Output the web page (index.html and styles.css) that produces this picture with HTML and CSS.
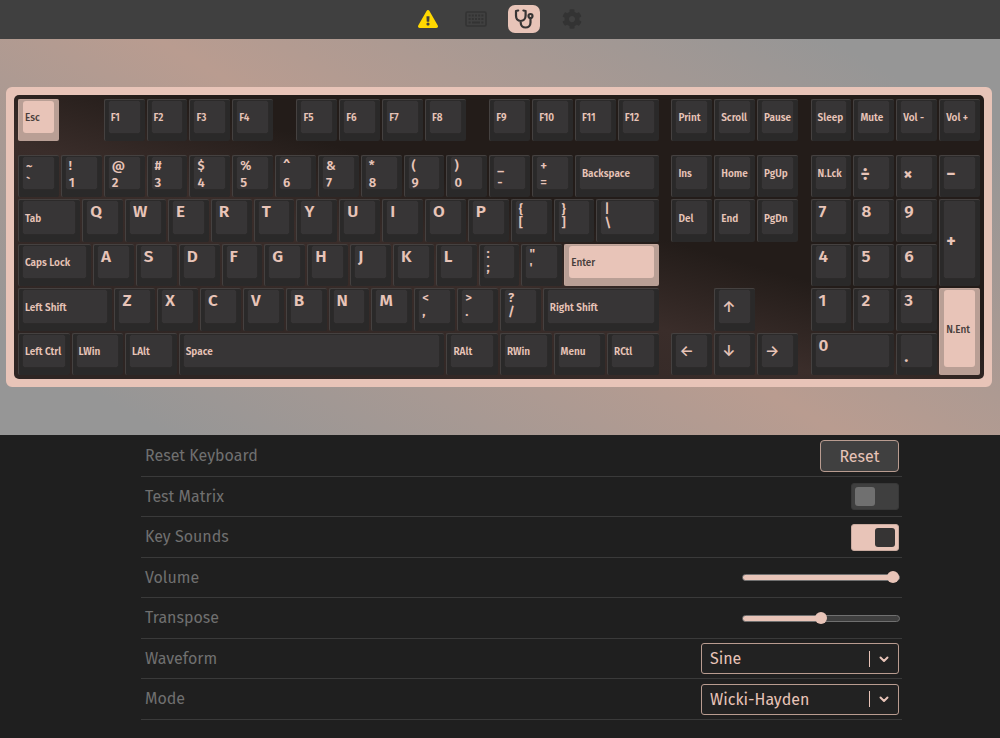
FILE: index.html
```html
<!DOCTYPE html>
<html lang="en">
<head>
<meta charset="utf-8">
<title>Key Test</title>
<link rel="stylesheet" href="styles.css">
</head>
<body>
<nav class="topbar">
  <button class="tab tab-warn" aria-label="Warnings"><svg width="20" height="18" viewBox="0 0 576 512"><path fill="currentColor" d="M569.517 440.013C587.975 472.007 564.806 512 527.94 512H48.054c-36.937 0-59.999-40.055-41.577-71.987L246.423 23.985c18.467-32.009 64.72-31.951 83.154 0l239.94 416.028zM288 354c-25.405 0-46 20.595-46 46s20.595 46 46 46 46-20.595 46-46-20.595-46-46-46zm-43.673-165.346l7.418 136c.347 6.364 5.609 11.346 11.982 11.346h48.546c6.373 0 11.635-4.982 11.982-11.346l7.418-136c.375-6.874-5.098-12.654-11.982-12.654h-63.383c-6.884 0-12.356 5.78-11.981 12.654z"/></svg></button>
  <button class="tab" aria-label="Configure"><svg width="22" height="16" viewBox="0 0 22 16" fill="none" stroke="currentColor"><rect x="1" y="1" width="20" height="14" rx="1.5" stroke-width="1.6"/><path stroke-width="2" stroke-dasharray="2 1.2" d="M3.6 4.6h15M3.6 8h15"/><path stroke-width="2" d="M3.6 11.6h2M7 11.6h8M16.4 11.6h2"/></svg></button>
  <button class="tab tab-active" aria-label="Test"><svg width="20" height="20" viewBox="0 0 20 20" fill="none" stroke="currentColor" stroke-width="2.2" stroke-linecap="round" stroke-linejoin="round"><path d="M4.2 1.5 2 2v4.6C2 10 4 12 6.7 12s4.9-2 4.9-5.4V2L9.4 1.5M6.7 12v1.5c0 3 2 5 4.9 5s4.9-2 4.9-5V9.5"/><circle cx="16.5" cy="7" r="2"/></svg></button>
  <button class="tab" aria-label="Settings"><svg width="20" height="20" viewBox="0 0 512 512"><path fill="currentColor" d="M487.4 315.7l-42.6-24.6c4.3-23.2 4.3-47 0-70.2l42.6-24.6c4.9-2.8 7.1-8.6 5.5-14-11.1-35.6-30-67.8-54.7-94.6-3.8-4.1-10-5.1-14.8-2.3L380.8 110c-17.9-15.4-38.5-27.3-60.8-35.1V25.8c0-5.6-3.9-10.5-9.4-11.7-36.7-8.2-74.3-7.8-109.2 0-5.5 1.2-9.4 6.1-9.4 11.7V75c-22.2 7.9-42.8 19.8-60.8 35.1L88.7 85.5c-4.9-2.8-11-1.9-14.8 2.3-24.7 26.7-43.6 58.9-54.7 94.6-1.7 5.4.6 11.2 5.5 14L67.3 221c-4.3 23.2-4.3 47 0 70.2l-42.6 24.6c-4.9 2.8-7.1 8.6-5.5 14 11.1 35.6 30 67.8 54.7 94.6 3.8 4.1 10 5.1 14.8 2.3l42.6-24.6c17.9 15.4 38.5 27.3 60.8 35.1v49.2c0 5.6 3.9 10.5 9.4 11.7 36.7 8.2 74.3 7.8 109.2 0 5.5-1.2 9.4-6.1 9.4-11.7v-49.2c22.2-7.9 42.8-19.8 60.8-35.1l42.6 24.6c4.9 2.8 11 1.9 14.8-2.3 24.7-26.7 43.6-58.9 54.7-94.6 1.5-5.5-.7-11.3-5.6-14.1zM256 336c-44.1 0-80-35.9-80-80s35.9-80 80-80 80 35.9 80 80-35.9 80-80 80z"/></svg></button>
</nav>

<main class="stage">
  <div class="case">
    <div class="keys">
      <!-- function row -->
      <button class="key accent"><span>Esc</span></button>
      <i class="w4"></i>
      <button class="key"><span>F1</span></button><button class="key"><span>F2</span></button><button class="key"><span>F3</span></button><button class="key"><span>F4</span></button>
      <i class="w2"></i>
      <button class="key"><span>F5</span></button><button class="key"><span>F6</span></button><button class="key"><span>F7</span></button><button class="key"><span>F8</span></button>
      <i class="w2"></i>
      <button class="key"><span>F9</span></button><button class="key"><span>F10</span></button><button class="key"><span>F11</span></button><button class="key"><span>F12</span></button>
      <i class="w1"></i>
      <button class="key"><span>Print</span></button><button class="key"><span>Scroll</span></button><button class="key"><span>Pause</span></button>
      <i class="w1"></i>
      <button class="key"><span>Sleep</span></button><button class="key"><span>Mute</span></button><button class="key"><span>Vol -</span></button><button class="key"><span>Vol +</span></button>
      <i class="w90"></i>

      <!-- number row -->
      <button class="key duo wide-duo"><span>~<br>`</span></button><button class="key duo wide-duo"><span>!<br>1</span></button><button class="key duo wide-duo"><span>@<br>2</span></button><button class="key duo wide-duo"><span>#<br>3</span></button><button class="key duo wide-duo"><span>$<br>4</span></button><button class="key duo wide-duo"><span>%<br>5</span></button><button class="key duo wide-duo"><span>^<br>6</span></button><button class="key duo wide-duo"><span>&amp;<br>7</span></button><button class="key duo wide-duo"><span>*<br>8</span></button><button class="key duo wide-duo"><span>(<br>9</span></button><button class="key duo wide-duo"><span>)<br>0</span></button><button class="key duo wide-duo"><span>_<br>-</span></button><button class="key duo wide-duo"><span>+<br>=</span></button>
      <button class="key w8"><span>Backspace</span></button>
      <i class="w1"></i>
      <button class="key"><span>Ins</span></button><button class="key"><span>Home</span></button><button class="key"><span>PgUp</span></button>
      <i class="w1"></i>
      <button class="key"><span>N.Lck</span></button><button class="key sign"><span>÷</span></button><button class="key sign"><span>×</span></button><button class="key sign"><span>−</span></button>

      <!-- top letter row -->
      <button class="key w6"><span>Tab</span></button>
      <button class="key big"><span>Q</span></button><button class="key big"><span>W</span></button><button class="key big"><span>E</span></button><button class="key big"><span>R</span></button><button class="key big"><span>T</span></button><button class="key big"><span>Y</span></button><button class="key big"><span>U</span></button><button class="key big"><span>I</span></button><button class="key big"><span>O</span></button><button class="key big"><span>P</span></button>
      <button class="key duo"><span>{<br>[</span></button><button class="key duo"><span>}<br>]</span></button><button class="key duo w6"><span>|<br>\</span></button>
      <i class="w1"></i>
      <button class="key"><span>Del</span></button><button class="key"><span>End</span></button><button class="key"><span>PgDn</span></button>
      <i class="w1"></i>
      <button class="key big"><span>7</span></button><button class="key big"><span>8</span></button><button class="key big"><span>9</span></button><button class="key sign tall"><span>+</span></button>

      <!-- home row -->
      <button class="key w7"><span>Caps Lock</span></button>
      <button class="key big"><span>A</span></button><button class="key big"><span>S</span></button><button class="key big"><span>D</span></button><button class="key big"><span>F</span></button><button class="key big"><span>G</span></button><button class="key big"><span>H</span></button><button class="key big"><span>J</span></button><button class="key big"><span>K</span></button><button class="key big"><span>L</span></button>
      <button class="key duo"><span>:<br>;</span></button><button class="key duo"><span>"<br>'</span></button>
      <button class="key accent w9"><span>Enter</span></button>
      <i class="w14"></i>
      <button class="key big"><span>4</span></button><button class="key big"><span>5</span></button><button class="key big"><span>6</span></button>

      <!-- bottom letter row -->
      <button class="key w9"><span>Left Shift</span></button>
      <button class="key big"><span>Z</span></button><button class="key big"><span>X</span></button><button class="key big"><span>C</span></button><button class="key big"><span>V</span></button><button class="key big"><span>B</span></button><button class="key big"><span>N</span></button><button class="key big"><span>M</span></button>
      <button class="key duo"><span>&lt;<br>,</span></button><button class="key duo"><span>&gt;<br>.</span></button><button class="key duo"><span>?<br>/</span></button>
      <button class="key w11"><span>Right Shift</span></button>
      <i class="w5"></i>
      <button class="key arrow"><span>↑</span></button>
      <i class="w5"></i>
      <button class="key big"><span>1</span></button><button class="key big"><span>2</span></button><button class="key big"><span>3</span></button><button class="key accent tall"><span>N.Ent</span></button>

      <!-- modifier row -->
      <button class="key w5"><span>Left Ctrl</span></button><button class="key w5"><span>LWin</span></button><button class="key w5"><span>LAlt</span></button><button class="key w25"><span>Space</span></button><button class="key w5"><span>RAlt</span></button><button class="key w5"><span>RWin</span></button><button class="key w5"><span>Menu</span></button><button class="key w5"><span>RCtl</span></button>
      <i class="w1"></i>
      <button class="key arrow"><span>←</span></button><button class="key arrow"><span>↓</span></button><button class="key arrow"><span>→</span></button>
      <i class="w1"></i>
      <button class="key big w8"><span>0</span></button><button class="key big point"><span>.</span></button>
    </div>
  </div>
</main>

<section class="panel">
  <div class="row"><span class="label" id="reset-label">Reset Keyboard</span><button class="reset">Reset</button></div>
  <div class="row"><label class="label" for="matrix">Test Matrix</label><input class="toggle" type="checkbox" id="matrix"></div>
  <div class="row"><label class="label" for="sounds">Key Sounds</label><input class="toggle" type="checkbox" id="sounds" checked></div>
  <div class="row"><label class="label" for="volume">Volume</label><input class="slider" type="range" id="volume" min="0" max="100" value="100" style="--fill:100%"></div>
  <div class="row"><label class="label" for="transpose">Transpose</label><input class="slider" type="range" id="transpose" min="-24" max="24" value="0" style="--fill:50%"></div>
  <div class="row"><label class="label" for="waveform">Waveform</label><span class="pick"><select id="waveform"><option>Sine</option><option>Square</option><option>Sawtooth</option></select><svg width="30" height="16" viewBox="0 0 30 16" fill="none" stroke="currentColor"><path d="M.5 0v16"/><path stroke-width="2" stroke-linecap="round" stroke-linejoin="round" d="m11.500 6.500 3.500 3.500 3.500-3.500"/></svg></span></div>
  <div class="row"><label class="label" for="mode">Mode</label><span class="pick"><select id="mode"><option>Wicki-Hayden</option><option>Chromatic</option></select><svg width="30" height="16" viewBox="0 0 30 16" fill="none" stroke="currentColor"><path d="M.5 0v16"/><path stroke-width="2" stroke-linecap="round" stroke-linejoin="round" d="m11.500 6.500 3.500 3.500 3.500-3.500"/></svg></span></div>
</section>
</body>
</html>
```

FILE: styles.css
```css
:root {
  --accent: #e8c4b8;
  --bar: #404040;
  --panel: #1f1f1f;
  --face: #373536;
}

* { box-sizing: border-box; }

body {
  margin: 0;
  min-height: 100vh;
  background: var(--panel);
  color: var(--accent);
  font-family: "Fira Sans", "Noto Sans", sans-serif;
}

button, select, input { font: inherit; color: inherit; margin: 0; }

.topbar {
  display: flex;
  justify-content: center;
  align-items: center;
  gap: 16px;
  height: 39px;
  padding-bottom: 2px;
  background: var(--bar);
}

.tab {
  display: grid;
  place-items: center;
  width: 32px;
  height: 28px;
  padding: 0;
  border: 0;
  border-radius: 7px;
  background: none;
  color: #333;
}

.tab-warn { color: #ffd800; }
.tab-active { background: var(--accent); color: #363434; }

.stage {
  padding: 48px 8px 48px 6px;
  background: linear-gradient(30deg, #969696 10%, #b99c90 50%, #969696 90%);
}

.case {
  border: 8px solid var(--accent);
  border-radius: 6px;
  background: var(--accent);
}

.keys {
  display: grid;
  grid-template-columns: repeat(90, minmax(0, 1fr));
  grid-template-rows: 44px 12px 44px 45px 44px 45px 44px;
  padding: 4px 2px 2px 4px;
  border-radius: 5px;
  background: linear-gradient(16deg, #2e2523 10%, #3a2d2a 42%, #231c19 58%);
}

.key {
  grid-column: span 4;
  display: flex;
  min-width: 0;
  margin: 0 2px 2px 0;
  padding: 1px 5px 8px 4px;
  border: 0;
  border-top: 1px solid #454140;
  border-left: 1px solid #454140;
  border-radius: 2px;
  background: #2a2929;
  font-size: 10px;
  font-weight: 600;
  line-height: 12px;
  text-align: left;
  white-space: nowrap;
}

.key span {
  flex: 1;
  display: flex;
  align-items: center;
  min-width: 0;
  padding: 2px 2px 0;
  border-radius: 3px;
  background: var(--face);
  box-shadow: 0 0 1px #454243;
}

.accent {
  border-color: #c4a79c;
  background: #b99f95;
  color: #463d3b;
  font-weight: 500;
}

.accent span { background: var(--accent); box-shadow: none; }

.big { font-size: 17px; line-height: 20px; }
.big span { align-items: flex-start; padding: 1px 3px 0; }

.duo { font-size: 13px; line-height: 14px; }
.duo span { display: block; padding: 1px 3px 0; }
.wide-duo { line-height: 17px; }
.wide-duo span { padding-top: 0; }

.sign { font-size: 18px; font-weight: 700; }
.arrow { font-family: Inter, sans-serif; font-size: 15px; }
.arrow span { padding: 0 3px; }
.point span { align-items: flex-end; }

.w1 { grid-column: span 1; }
.w2 { grid-column: span 2; }
.w4 { grid-column: span 4; }
.w5 { grid-column: span 5; }
.w6 { grid-column: span 6; }
.w7 { grid-column: span 7; }
.w8 { grid-column: span 8; }
.w9 { grid-column: span 9; }
.w11 { grid-column: span 11; }
.w14 { grid-column: span 14; }
.w25 { grid-column: span 25; }
.w90 { grid-column: span 90; }
.tall { grid-row: span 2; }

.panel { padding: 1px 98px 16px 141px; }

.row {
  display: flex;
  justify-content: space-between;
  align-items: center;
  height: 41px;
  padding: 0 3px 0 4px;
  border-bottom: 1px solid #3a3a3a;
}

.row:nth-child(even) { height: 40px; }

.label { color: #707070; font-size: 16px; line-height: 20px; }

.reset {
  width: 79px;
  height: 32px;
  padding: 0;
  border: 1px solid #b99c90;
  border-radius: 4px;
  background: var(--bar);
  font-size: 16px;
}

.toggle {
  appearance: none;
  display: flex;
  width: 48px;
  height: 27px;
  padding: 3px;
  border: 1px solid #383838;
  border-radius: 3px;
  background: #3f3f3f;
}

.toggle::before {
  content: "";
  width: 20px;
  border-radius: 3px;
  background: #707070;
}

.toggle:checked {
  justify-content: flex-end;
  border-color: #c9aa9f;
  background: var(--accent);
}

.toggle:checked::before { background: #363434; }

.slider {
  appearance: none;
  width: 158px;
  height: 12px;
  margin-right: -1px;
  background: none;
}

.slider::-webkit-slider-runnable-track {
  height: 7px;
  border: 1px solid #707070;
  border-radius: 4px;
  background: linear-gradient(var(--accent) 0 0) 0 0 / var(--fill) 100% no-repeat border-box #3f3f3f;
}

.slider::-webkit-slider-thumb {
  appearance: none;
  width: 12px;
  height: 12px;
  margin-top: -4px;
  border-radius: 50%;
  background: var(--accent);
}

.pick {
  display: grid;
  align-items: center;
  width: 198px;
}

.pick select, .pick svg { grid-area: 1 / 1; }

.pick select {
  appearance: none;
  height: 31px;
  padding: 0 40px 0 8px;
  border: 1px solid #b99c90;
  border-radius: 3px;
  background: #222;
  font-size: 16px;
}

.pick svg { justify-self: end; pointer-events: none; }
```
